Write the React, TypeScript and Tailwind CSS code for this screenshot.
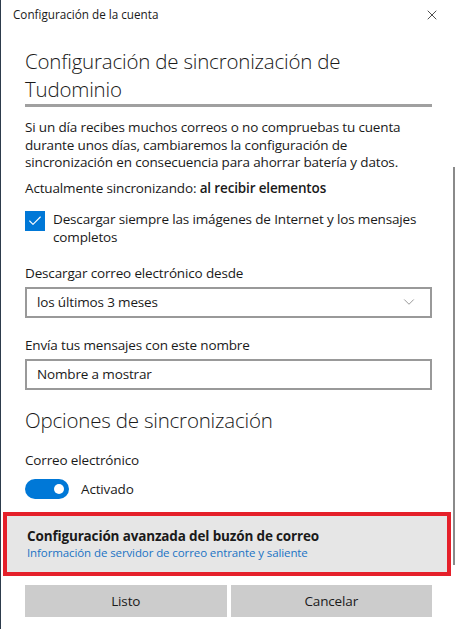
import { ChevronDown, X, Check } from 'lucide-react';

export default function App() {
  return (
    <div className="relative w-[457px] h-[629px] bg-white border-l border-[#2d3b4c] overflow-hidden text-[#1a1a1a]" style={{ fontFamily: '"Open Sans", "Noto Sans", sans-serif' }}>
      {/* Barra de título */}
      <div className="flex items-center justify-between h-[30px] pl-[12px] pr-[17px]">
        <span className="text-[11.7px]">Configuración de la cuenta</span>
        <X size={16} strokeWidth={1.2} className="text-[#222]" />
      </div>

      {/* Scrollbar */}
      <div className="absolute right-[2px] top-[167px] w-[2px] h-[398px] bg-[#8a8a8a]" />

      <div className="pl-[24px] pr-[25px]">
        <h1 className="mt-[17px] text-[20.5px] font-light leading-[28px] tracking-[-0.2px] pb-[1px] border-b-[3px] border-[#a0a0a0]">
          Configuración de sincronización de
          <br />
          Tudominio
        </h1>

        <p className="mt-[12px] text-[13.5px] leading-[17.5px] tracking-[-0.15px] pr-[10px]">
          Si un día recibes muchos correos o no compruebas tu cuenta durante unos días, cambiaremos la configuración de sincronización en consecuencia para ahorrar batería y datos.
        </p>

        <p className="mt-[7px] text-[13.5px] leading-[18px] tracking-[-0.15px]">
          Actualmente sincronizando: <span className="font-semibold">al recibir elementos</span>
        </p>

        <div className="mt-[13px] flex gap-[8px]">
          <div className="shrink-0 w-[20px] h-[20px] bg-[#0078d7] flex items-center justify-center mt-[1px]">
            <Check size={16} strokeWidth={1.6} className="text-white" />
          </div>
          <span className="text-[13.5px] leading-[18px] tracking-[-0.15px]">
            Descargar siempre las imágenes de Internet y los mensajes completos
          </span>
        </div>

        <div className="mt-[18px] text-[13.5px] leading-[18px] tracking-[-0.15px]">Descargar correo electrónico desde</div>
        <div className="mt-[5px] h-[31px] border-2 border-[#999] flex items-center justify-between pl-[10px] pr-[12px] text-[13.5px] tracking-[-0.15px]">
          <span>los últimos 3 meses</span>
          <ChevronDown size={18} strokeWidth={1} className="text-[#777]" />
        </div>

        <div className="mt-[18px] text-[13.5px] leading-[18px] tracking-[-0.15px]">Envía tus mensajes con este nombre</div>
        <div className="mt-[5px] h-[31px] border-2 border-[#999] flex items-center pl-[10px] text-[13.5px] tracking-[-0.15px]">
          Nombre a mostrar
        </div>

        <h2 className="mt-[16px] text-[20.5px] font-light leading-[28px] tracking-[-0.2px]">Opciones de sincronización</h2>

        <div className="mt-[17px] text-[13.5px] leading-[18px] tracking-[-0.15px]">Correo electrónico</div>
        <div className="mt-[10px] flex items-center gap-[12px]">
          <div className="w-[44px] h-[20px] rounded-full bg-[#0078d7] flex items-center justify-end pr-[5px]">
            <div className="w-[10px] h-[10px] rounded-full bg-white" />
          </div>
          <span className="text-[13.5px] tracking-[-0.15px]">Activado</span>
        </div>
      </div>

      {/* Configuración avanzada */}
      <div className="mt-[13px] ml-[2px] mr-[6px] border-[4px] border-[#e5202a] bg-[#e6e6e6] h-[64px] pl-[20px] pt-[11px]">
        <div className="text-[13.5px] font-bold leading-[18px] tracking-[-0.15px]">Configuración avanzada del buzón de correo</div>
        <div className="text-[11.5px] leading-[16px] text-[#1a73c4] tracking-[-0.1px]">Información de servidor de correo entrante y saliente</div>
      </div>

      <div className="mt-[9px] pl-[24px] pr-[25px] flex gap-[4px]">
        <button className="flex-1 h-[32px] bg-[#cccccc] text-[13.5px] tracking-[-0.15px]">Listo</button>
        <button className="flex-1 h-[32px] bg-[#cccccc] text-[13.5px] tracking-[-0.15px]">Cancelar</button>
      </div>
    </div>
  );
}
